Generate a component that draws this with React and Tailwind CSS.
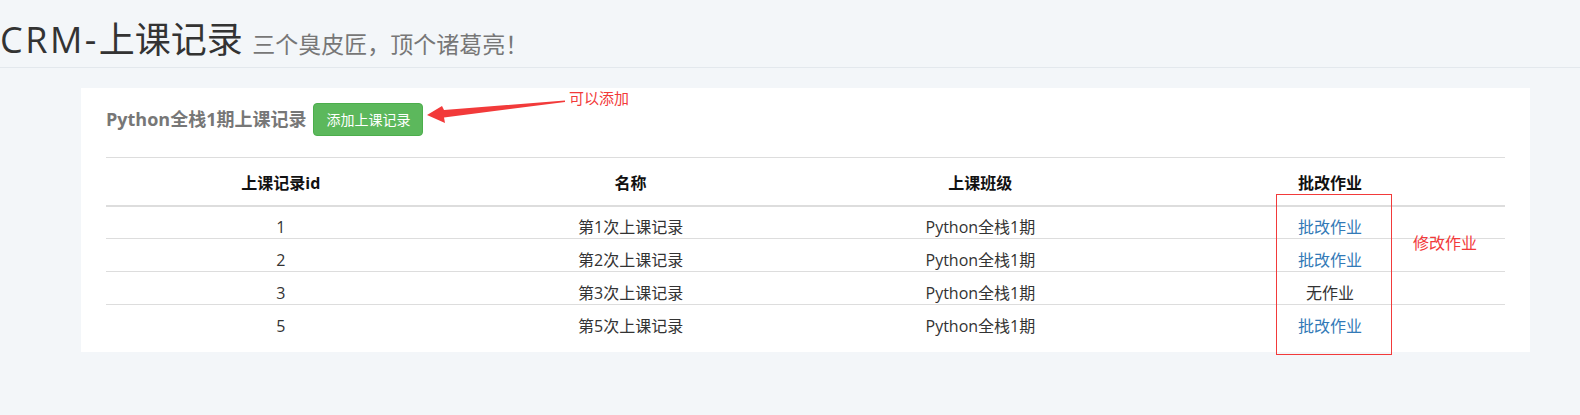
import React from 'react';

const records = [
  { id: 1, name: '第1次上课记录', klass: 'Python全栈1期', homework: true },
  { id: 2, name: '第2次上课记录', klass: 'Python全栈1期', homework: true },
  { id: 3, name: '第3次上课记录', klass: 'Python全栈1期', homework: false },
  { id: 5, name: '第5次上课记录', klass: 'Python全栈1期', homework: true },
];

const App = () => {
  return (
    <div
      className="relative min-h-screen bg-[#f3f6f9] text-[#333]"
      style={{ fontFamily: '"Open Sans", "Noto Sans CJK SC", sans-serif' }}
    >
      {/* Header */}
      <div className="h-[68px] border-b border-[#e3e8ed]">
        <h1 className="pt-[20px] text-[36px] leading-[40px] text-[#333]">
          <span className="tracking-[2.5px]">CRM-</span>上课记录{' '}
          <small className="text-[23px] text-[#777]">三个臭皮匠，顶个诸葛亮！</small>
        </h1>
      </div>

      {/* Card */}
      <div className="mt-[20px] ml-[81px] mr-[50px] bg-white px-[25px] pt-[15px] pb-[15px]">
        <div className="flex items-center h-[33px]">
          <h4 className="text-[18px] font-bold text-[#777]">Python全栈1期上课记录</h4>
          <button className="ml-[7px] h-[33px] px-[12px] rounded-[4px] border border-[#4cae4c] bg-[#5cb85c] text-white text-[14px]">
            添加上课记录
          </button>
        </div>

        <div className="mt-[21px] text-[16px]">
          <div className="grid grid-cols-4 h-[50px] border-t border-b-2 border-[#ddd] pt-[14px] text-center font-bold text-[#111] leading-[22px]">
            <div>上课记录id</div>
            <div>名称</div>
            <div>上课班级</div>
            <div>批改作业</div>
          </div>
          {records.map((r, i) => (
            <div
              key={r.id}
              className={
                i === 0
                  ? 'grid grid-cols-4 h-[31px] pt-[9px] text-center leading-[22px]'
                  : 'grid grid-cols-4 h-[33px] border-t border-[#ddd] pt-[10px] text-center leading-[22px]'
              }
            >
              <div>{r.id}</div>
              <div>{r.name}</div>
              <div>{r.klass}</div>
              <div>
                {r.homework ? <a className="text-[#337ab7]">批改作业</a> : '无作业'}
              </div>
            </div>
          ))}
        </div>
      </div>

      {/* Annotations */}
      <svg className="absolute left-0 top-0 pointer-events-none" width="1580" height="415">
        <polygon
          points="565,100.5 444,110 442,106 427,115 445,123 444,117.5 565,102"
          fill="#f23a3a"
        />
      </svg>
      <div className="absolute left-[569px] top-[87px] text-[15px] leading-[22px] text-[#f23a3a]">可以添加</div>
      <div className="absolute left-[1276px] top-[194px] w-[116px] h-[161px] border border-[#f23a3a]" />
      <div className="absolute left-[1413px] top-[232px] text-[16px] leading-[22px] text-[#f23a3a]">修改作业</div>
    </div>
  );
};

export default App;
